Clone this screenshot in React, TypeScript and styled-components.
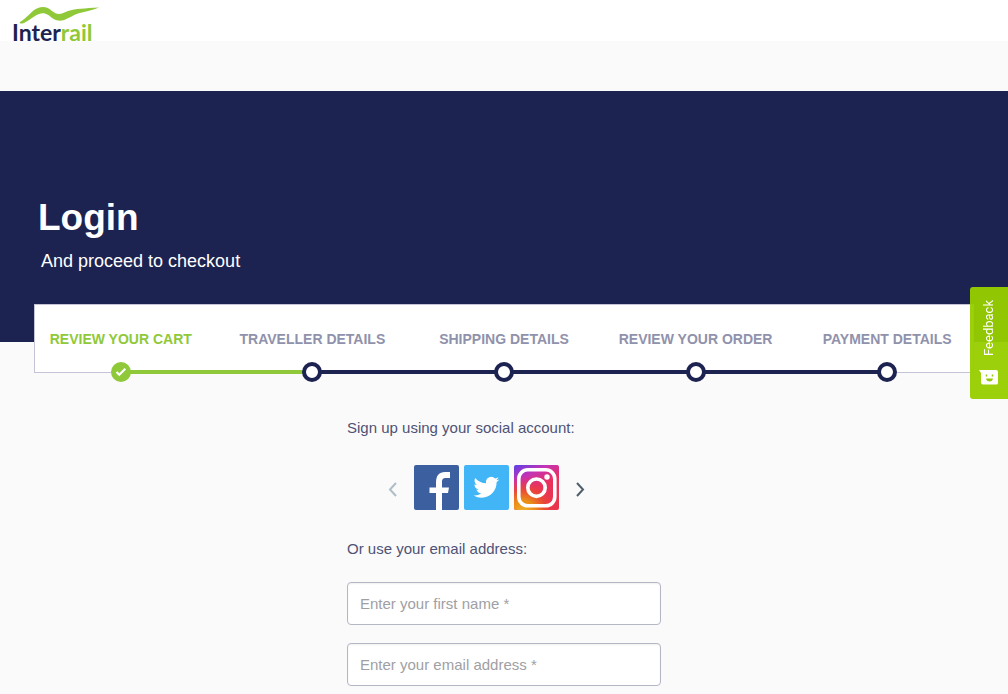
import React from "react";
import styled, { createGlobalStyle } from "styled-components";

const navy = "#1d2350";
const green = "#8fc93a";

const GlobalStyle = createGlobalStyle`
  *, *::before, *::after { box-sizing: border-box; }
  body {
    margin: 0;
    background: #fafafa;
    color: #4f5275;
    font-family: "Liberation Sans", Arial, sans-serif;
    font-size: 15px;
  }
  h1, p, ol { margin: 0; padding: 0; }
  button { padding: 0; border: 0; background: none; cursor: pointer; font: inherit; }
`;

const Header = styled.header`
  height: 41px;
  padding-left: 12px;
  margin-bottom: 50px;
  background: #fff;
`;

const LogoLink = styled.a`
  display: block;
  width: 90px;

  svg { display: block; }
`;

const Hero = styled.section`
  background: ${navy};
  color: #fff;
  padding: 105px 38px 69px;
`;

const Title = styled.h1`
  font-size: 37px;
  line-height: 44px;
`;

const Subtitle = styled.p`
  padding: 10px 3px 0;
  font-size: 18px;
  line-height: 23px;
`;

const Progress = styled.nav`
  margin: -38px 34px 0;
  height: 69px;
  background: #fff;
  border: 1px solid #c4c4d6;
`;

const StepList = styled.ol`
  display: flex;
  margin: 0 -10px;
  list-style: none;
`;

const Step = styled.li<{ $line?: string }>`
  flex: 1;
  position: relative;
  display: flex;
  flex-direction: column;
  align-items: center;
  gap: 14px;
  padding-top: 25px;

  &::after {
    content: "";
    display: ${(p) => (p.$line ? "block" : "none")};
    position: absolute;
    left: 50%;
    bottom: 8px;
    width: 100%;
    height: 4px;
    background: ${(p) => p.$line};
  }
`;

const StepLabel = styled.span<{ $active?: boolean }>`
  font-size: 14px;
  line-height: 18px;
  font-weight: bold;
  white-space: nowrap;
  color: ${(p) => (p.$active ? green : "#9092ac")};
`;

const Dot = styled.span<{ $done?: boolean }>`
  position: relative;
  z-index: 1;
  display: grid;
  place-items: center;
  width: 20px;
  height: 20px;
  border-radius: 50%;
  border: 4px solid ${(p) => (p.$done ? green : navy)};
  background: ${(p) => (p.$done ? green : "#fff")};
`;

const Form = styled.form`
  width: 314px;
  max-width: 100%;
  margin: 45px auto 0;
`;

const Lead = styled.p`
  line-height: 20px;
`;

const Socials = styled.div`
  display: flex;
  align-items: center;
  gap: 5px;
  margin: 27px 0 29px 38px;
`;

const Arrow = styled.button<{ $next?: boolean }>`
  width: 16px;
  height: 24px;
  margin: ${(p) => (p.$next ? "2px 0 0 8px" : "2px 8px 0 0")};
  color: ${(p) => (p.$next ? "#4f5f6b" : "#b0bec8")};
`;

const SocialButton = styled.button`
  width: 45px;
  height: 45px;
  border-radius: 2px;
  overflow: hidden;

  svg { display: block; }
`;

const Field = styled.input`
  display: block;
  width: 100%;
  height: 43px;
  padding: 0 12px;
  border: 1px solid #b4b7c3;
  border-radius: 4px;
  background: #fff;
  color: ${navy};
  font: inherit;
  box-shadow: inset 0 1px 2px rgba(0, 0, 0, 0.06);

  &::placeholder { color: #a0a0a4; opacity: 1; }
`;

const Fields = styled.div`
  display: grid;
  gap: 18px;
  margin-top: 23px;
  padding-bottom: 8px;
`;

const FeedbackTab = styled.button`
  position: fixed;
  z-index: 2;
  right: 0;
  top: 287px;
  display: flex;
  flex-direction: column;
  align-items: center;
  gap: 13px;
  width: 38px;
  height: 112px;
  padding-top: 13px;
  border-radius: 3px 0 0 3px;
  background: rgba(150, 206, 0, 0.955);
  color: #fff;
`;

const FeedbackText = styled.span`
  writing-mode: vertical-rl;
  transform: rotate(180deg);
  font-family: Roboto, sans-serif;
  font-size: 13px;
  line-height: 16px;
`;

const Logo = () => (
  <svg width="90" height="50" viewBox="0 0 90 50" aria-hidden="true">
    <path
      d="M8 22C14 19 20 10 26 8C31 6 36 7 40 11C46 16 50 13.500 56 11C64 8.500 72 8.500 87 7.500C80 10.500 72 11.500 66 13.500C58 16.500 53 21.500 46 20.500C40 19.500 38 15 33 13.500C26 12 20 19 12 23C9 24 7 23.500 8 22z"
      fill={green}
    />
    <text x="0" y="41" fontFamily="Lato, sans-serif" fontWeight="bold" fontSize="23" fill={navy}>
      Inter<tspan fill={green}>rail</tspan>
    </text>
  </svg>
);

const Chevron = ({ next = false }: { next?: boolean }) => (
  <svg width="16" height="24" viewBox="0 0 16 24" fill="none" stroke="currentColor" strokeWidth="2" aria-hidden="true">
    <path d={next ? "M5 6l6 6.500-6 6.500" : "M11 6l-6 6.500 6 6.500"} />
  </svg>
);

const Facebook = () => (
  <svg width="45" height="45" viewBox="0 0 45 45" aria-hidden="true">
    <rect width="45" height="45" fill="#3c609f" />
    <path d="M22 45V28h-6.500v-5.500h6.500v-5c0-7 3-10.500 9-10.500h5v6h-4c-3 0-4 1-4 4v5.500h7l-1 5.500h-6v17z" fill="#fff" />
  </svg>
);

const Twitter = () => (
  <svg width="45" height="45" viewBox="0 0 45 45" aria-hidden="true">
    <rect width="45" height="45" fill="#41b5f5" />
    <g transform="translate(9.500 9.500) scale(1.070)">
      <path
        d="M23.950 4.570a10 10 0 0 1-2.820.770 4.960 4.960 0 0 0 2.160-2.720c-.950.560-2 .960-3.130 1.180a4.920 4.920 0 0 0-8.380 4.480C7.690 8.100 4.070 6.130 1.640 3.160a4.820 4.820 0 0 0-.670 2.480c0 1.710.870 3.210 2.190 4.100a4.900 4.900 0 0 1-2.230-.620v.060a4.920 4.920 0 0 0 3.950 4.830 5 5 0 0 1-2.210.080 4.940 4.940 0 0 0 4.600 3.420A9.870 9.870 0 0 1 0 19.540a13.990 13.990 0 0 0 7.550 2.210c9.050 0 14-7.500 14-13.980 0-.210 0-.420-.020-.630a9.940 9.940 0 0 0 2.420-2.570z"
        fill="#fff"
      />
    </g>
  </svg>
);

const Instagram = () => (
  <svg width="45" height="45" viewBox="0 0 45 45" aria-hidden="true">
    <defs>
      <linearGradient id="igBase" x1="0" y1="0" x2="0.500" y2="1">
        <stop offset="0" stopColor="#5a40e8" />
        <stop offset="0.300" stopColor="#c432b4" />
        <stop offset="0.600" stopColor="#ea3060" />
        <stop offset="1" stopColor="#e8364c" />
      </linearGradient>
      <radialGradient id="igWarm" cx="0.200" cy="1.050" r="0.800">
        <stop offset="0" stopColor="#eeb52c" />
        <stop offset="0.350" stopColor="#ea8a18" />
        <stop offset="0.650" stopColor="#ea4a30" stopOpacity="0.800" />
        <stop offset="1" stopColor="#ea3060" stopOpacity="0" />
      </radialGradient>
    </defs>
    <rect width="45" height="45" fill="url(#igBase)" />
    <rect width="45" height="45" fill="url(#igWarm)" />
    <g fill="none" stroke="#fff" strokeWidth="3.600">
      <rect x="4.800" y="4.800" width="36" height="36" rx="9" />
      <circle cx="22.500" cy="22.700" r="8.700" />
    </g>
    <circle cx="33" cy="12" r="2.700" fill="#fff" />
  </svg>
);

const steps = ["Traveller details", "Shipping details", "Review your order", "Payment details"];

export default function App() {
  return (
    <>
      <GlobalStyle />
      <Header>
        <LogoLink href="#" aria-label="Interrail">
          <Logo />
        </LogoLink>
      </Header>
      <main>
        <Hero>
          <Title>Login</Title>
          <Subtitle>And proceed to checkout</Subtitle>
        </Hero>
        <Progress aria-label="Checkout progress">
          <StepList>
            <Step $line={green}>
              <StepLabel $active>REVIEW YOUR CART</StepLabel>
              <Dot $done>
                <svg width="12" height="12" viewBox="0 0 12 12" fill="none" stroke="#fff" strokeWidth="2.200" aria-hidden="true">
                  <path d="M1.500 6l2.800 2.800 6-6" />
                </svg>
              </Dot>
            </Step>
            {steps.map((label, i) => (
              <Step key={label} $line={i < steps.length - 1 ? navy : undefined}>
                <StepLabel>{label.toUpperCase()}</StepLabel>
                <Dot />
              </Step>
            ))}
          </StepList>
        </Progress>
        <Form>
          <Lead>Sign up using your social account:</Lead>
          <Socials>
            <Arrow type="button" aria-label="Previous"><Chevron /></Arrow>
            <SocialButton type="button" aria-label="Facebook"><Facebook /></SocialButton>
            <SocialButton type="button" aria-label="Twitter"><Twitter /></SocialButton>
            <SocialButton type="button" aria-label="Instagram"><Instagram /></SocialButton>
            <Arrow type="button" $next aria-label="Next"><Chevron next /></Arrow>
          </Socials>
          <Lead>Or use your email address:</Lead>
          <Fields>
            <Field type="text" aria-label="First name" placeholder="Enter your first name *" />
            <Field type="email" aria-label="Email address" placeholder="Enter your email address *" />
          </Fields>
        </Form>
      </main>
      <FeedbackTab type="button">
        <FeedbackText>Feedback</FeedbackText>
        <svg width="20" height="17" viewBox="0 0 20 17" aria-hidden="true">
          <path d="M0 1h17q2 0 2 2v11q0 1.500-2 1.500H4q-2 0-2-2V4z" fill="#fff" />
          <path d="M7.500 5.500v2M13.500 5.500v2" fill="none" stroke="#96c90a" strokeWidth="1.500" />
          <path d="M7 9.500h7q-.500 3-3.500 3t-3.500-3z" fill="#96c90a" />
        </svg>
      </FeedbackTab>
    </>
  );
}
